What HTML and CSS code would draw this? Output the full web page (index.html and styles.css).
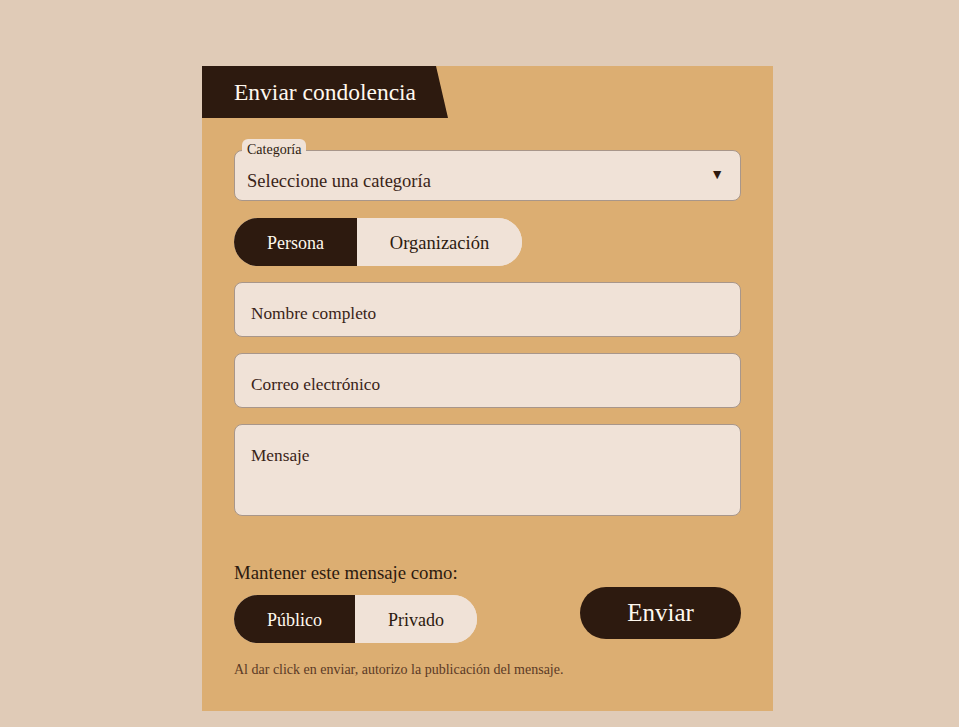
FILE: index.html
```html
<!DOCTYPE html>
<html lang="es">
<head>
<meta charset="utf-8">
<title>Enviar condolencia</title>
<link rel="stylesheet" href="styles.css">
</head>
<body>
<main class="card">
  <h2 class="tab">Enviar condolencia</h2>
  <form class="form">
    <div class="select">
      <span class="select-label">Categoría</span>
      <span class="select-value">Seleccione una categoría</span>
      <span class="select-arrow">▼</span>
    </div>
    <div class="toggle toggle-type">
      <button type="button" class="seg seg-on seg-persona">Persona</button>
      <button type="button" class="seg seg-org">Organización</button>
    </div>
    <input class="field" type="text" placeholder="Nombre completo">
    <input class="field" type="email" placeholder="Correo electrónico">
    <textarea class="field area" placeholder="Mensaje"></textarea>
    <div class="bottom">
      <div class="privacy">
        <p class="privacy-label">Mantener este mensaje como:</p>
        <div class="toggle toggle-priv">
          <button type="button" class="seg seg-on seg-pub">Público</button>
          <button type="button" class="seg seg-priv">Privado</button>
        </div>
      </div>
      <button type="button" class="send">Enviar</button>
    </div>
    <p class="note">Al dar click en enviar, autorizo la publicación del mensaje.</p>
  </form>
</main>
</body>
</html>
```
FILE: styles.css
```css
html, body {
  margin: 0;
  padding: 0;
}
body {
  background: #e0cbb7;
  font-family: "Liberation Serif", "DejaVu Serif", serif;
  color: #2d1a0f;
  min-height: 727px;
  padding-top: 66px;
  box-sizing: border-box;
}
.card {
  width: 571px;
  margin-left: 202px;
  background: #dcae72;
  padding-bottom: 33px;
}
.tab {
  margin: 0;
  width: 246px;
  height: 52px;
  box-sizing: border-box;
  padding-left: 32px;
  display: flex;
  align-items: center;
  background: #2d1a0f;
  color: #fff8ee;
  font-weight: normal;
  font-size: 23.5px;
  clip-path: polygon(0 0, 234px 0, 246px 100%, 0 100%);
}
.form {
  padding: 32px 32px 0;
  display: flex;
  flex-direction: column;
}
.select {
  position: relative;
  height: 51px;
  box-sizing: border-box;
  border: 1px solid #a8968a;
  border-radius: 8px;
  background: #f0e2d7;
  display: flex;
  align-items: center;
  padding: 11px 12px 0 12px;
}
.select-label {
  position: absolute;
  top: -12px;
  left: 7px;
  background: #f0e2d7;
  border-radius: 6px 6px 0 0;
  padding: 1px 5px 0;
  font-size: 14px;
  line-height: 19px;
  color: #2d1a0f;
}
.select-value {
  flex: 1;
  font-size: 18.5px;
  color: #3a2418;
}
.select-arrow {
  font-size: 14px;
  margin-right: 4px;
  margin-top: -12px;
  color: #2d1a0f;
}
.toggle {
  display: flex;
  height: 48px;
  border-radius: 24px;
  overflow: hidden;
  background: #f0e2d7;
  align-self: flex-start;
}
.toggle-type {
  margin-top: 17px;
  width: 288px;
}
.seg {
  border: 0;
  margin: 0;
  padding: 2px 0 0;
  font-family: inherit;
  font-size: 18px;
  background: #f0e2d7;
  color: #2d1a0f;
  cursor: pointer;
}
.seg-on {
  background: #2d1a0f;
  color: #fff8ee;
}
.seg-persona { width: 123px; }
.seg-org { width: 165px; font-size: 18.5px; }
.field {
  margin: 16px 0 0;
  height: 55px;
  box-sizing: border-box;
  border: 1px solid #a8968a;
  border-radius: 8px;
  background: #f0e2d7;
  padding: 9px 16px 0;
  font-family: inherit;
  font-size: 17.3px;
  color: #3a2418;
  outline: none;
}
.field::placeholder {
  color: #3a2418;
  opacity: 1;
}
.area {
  height: 92px;
  padding-top: 21px;
  resize: none;
  display: block;
}
.bottom {
  margin-top: 46px;
  display: flex;
  justify-content: space-between;
  align-items: flex-end;
}
.privacy-label {
  margin: 0 0 11px;
  font-size: 18.8px;
  line-height: 22px;
}
.toggle-priv {
  width: 243px;
}
.seg-pub { width: 121px; }
.seg-priv { width: 122px; }
.send {
  width: 161px;
  height: 52px;
  margin-bottom: 4px;
  border: 0;
  border-radius: 26px;
  background: #2d1a0f;
  color: #fff8ee;
  font-family: inherit;
  font-size: 25px;
  padding: 0 0 1px;
  cursor: pointer;
}
.note {
  margin: 19px 0 0;
  font-size: 14px;
  line-height: 16px;
  color: #5b3a26;
}
```
